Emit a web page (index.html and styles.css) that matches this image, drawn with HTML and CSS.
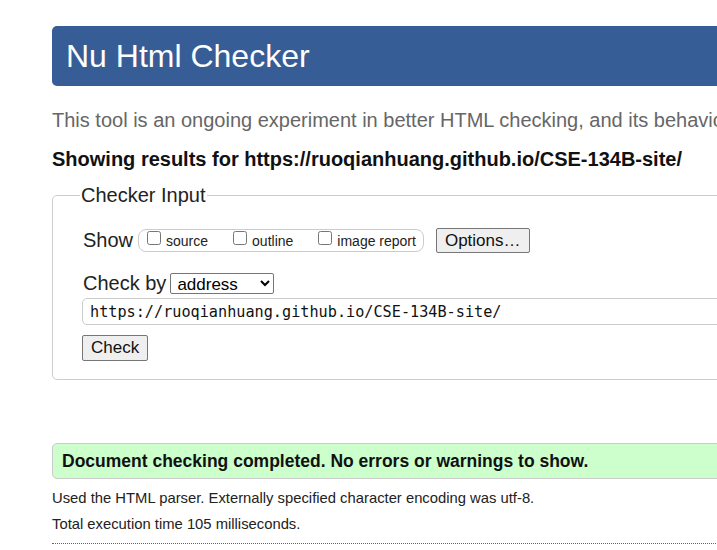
FILE: index.html
```html
<!DOCTYPE html>
<html>
<head>
<meta charset="utf-8">
<title>Nu Html Checker</title>
<link rel="stylesheet" href="styles.css">
</head>
<body>
<div class="page">
  <h1 class="title">Nu Html Checker</h1>
  <p class="intro">This tool is an ongoing experiment in better HTML checking, and its behavior remains subject to change</p>
  <p class="showing">Showing results for https://ruoqianhuang.github.io/CSE-134B-site/</p>
  <fieldset class="input-box">
    <legend class="legend">Checker Input</legend>
    <div class="row show-row">
      <span class="label">Show</span>
      <span class="checks">
        <label class="check"><input type="checkbox">source</label>
        <label class="check"><input type="checkbox">outline</label>
        <label class="check"><input type="checkbox">image report</label>
      </span>
      <button class="btn options">Options…</button>
    </div>
    <div class="row checkby-row">
      <span class="label">Check by</span>
      <select class="select"><option>address</option></select>
    </div>
    <input class="url" type="text" value="https://ruoqianhuang.github.io/CSE-134B-site/">
    <div class="row">
      <button class="btn check-btn">Check</button>
    </div>
  </fieldset>
  <p class="success">Document checking completed. No errors or warnings to show.</p>
  <p class="details">Used the HTML parser. Externally specified character encoding was utf-8.</p>
  <p class="details">Total execution time 105 milliseconds.</p>
  <hr class="dotted">
</div>
</body>
</html>
```
FILE: styles.css
```css
html, body {
  margin: 0;
  padding: 0;
  overflow: hidden;
  background: #fff;
}
body {
  font-family: "Liberation Sans", Arial, sans-serif;
  color: #111;
}
.page {
  width: 1000px;
  padding: 26px 0 0 52px;
}
.title {
  margin: 0;
  height: 60px;
  box-sizing: border-box;
  background: #365d95;
  color: #fff;
  font-weight: normal;
  font-size: 32px;
  line-height: 60px;
  padding-left: 14px;
  border-radius: 5px;
}
.intro {
  margin: 22px 0 0;
  font-size: 20px;
  line-height: 24px;
  color: #666;
  white-space: nowrap;
}
.showing {
  margin: 15px 0 0;
  font-size: 20px;
  line-height: 24px;
  font-weight: bold;
  white-space: nowrap;
}
.input-box {
  margin: 13px 0 0;
  border: 1px solid #ccc;
  border-radius: 5px;
  padding: 8px 0 18px 30px;
}
.legend {
  font-size: 20px;
  padding: 0 1px;
  margin-left: -3px;
  color: #222;
}
.row {
  display: flex;
  align-items: center;
}
.label {
  font-size: 20px;
  color: #222;
}
.show-row {
  margin-top: 13px;
}
.checks {
  margin-left: 5px;
  border: 1px solid #ccc;
  border-radius: 8px;
  padding: 0 7px 0 8px;
  height: 21px;
  display: flex;
  align-items: center;
  gap: 25px;
}
.check {
  font-size: 14px;
  display: flex;
  align-items: center;
  color: #222;
}
.check input {
  margin: 0 5px 6px 0;
  width: 14px;
  height: 14px;
}
.btn {
  font-family: "Liberation Sans", Arial, sans-serif;
  font-size: 17px;
  background: #efefef;
  border: 1px solid #767676;
  border-radius: 2px;
  color: #111;
  padding: 0 8px;
  height: 25px;
}
.options {
  margin-left: 12px;
}
.checkby-row {
  margin-top: 19px;
}
.select {
  margin-left: 4px;
  font-family: "Liberation Sans", Arial, sans-serif;
  font-size: 17px;
  height: 21px;
  width: 104px;
  border: 1px solid #767676;
  border-radius: 2px;
  background: #fff;
  padding: 0 2px;
}
.url {
  display: block;
  margin: 3px 0 0 -1px;
  width: 100%;
  box-sizing: border-box;
  height: 27px;
  border: 1px solid #ccc;
  border-radius: 5px;
  padding: 0 7px;
  font-family: "DejaVu Sans Mono", "Liberation Mono", monospace;
  font-size: 15.2px;
  color: #111;
}
.check-btn {
  margin-top: 10px;
  margin-left: -1px;
  height: 26px;
}
.success {
  margin: 63px 0 0;
  background: #ccffcc;
  border: 1px solid #ccc;
  border-radius: 5px;
  height: 36px;
  box-sizing: border-box;
  line-height: 34px;
  padding-left: 9px;
  font-weight: bold;
  font-size: 17.5px;
  color: #111;
}
.details {
  margin: 11px 0 0;
  font-size: 14.8px;
  line-height: 17px;
  color: #222;
}
.details + .details {
  margin-top: 9px;
}
.dotted {
  margin: 10px 0 0;
  border: 0;
  border-top: 1px dotted #666;
}
```
